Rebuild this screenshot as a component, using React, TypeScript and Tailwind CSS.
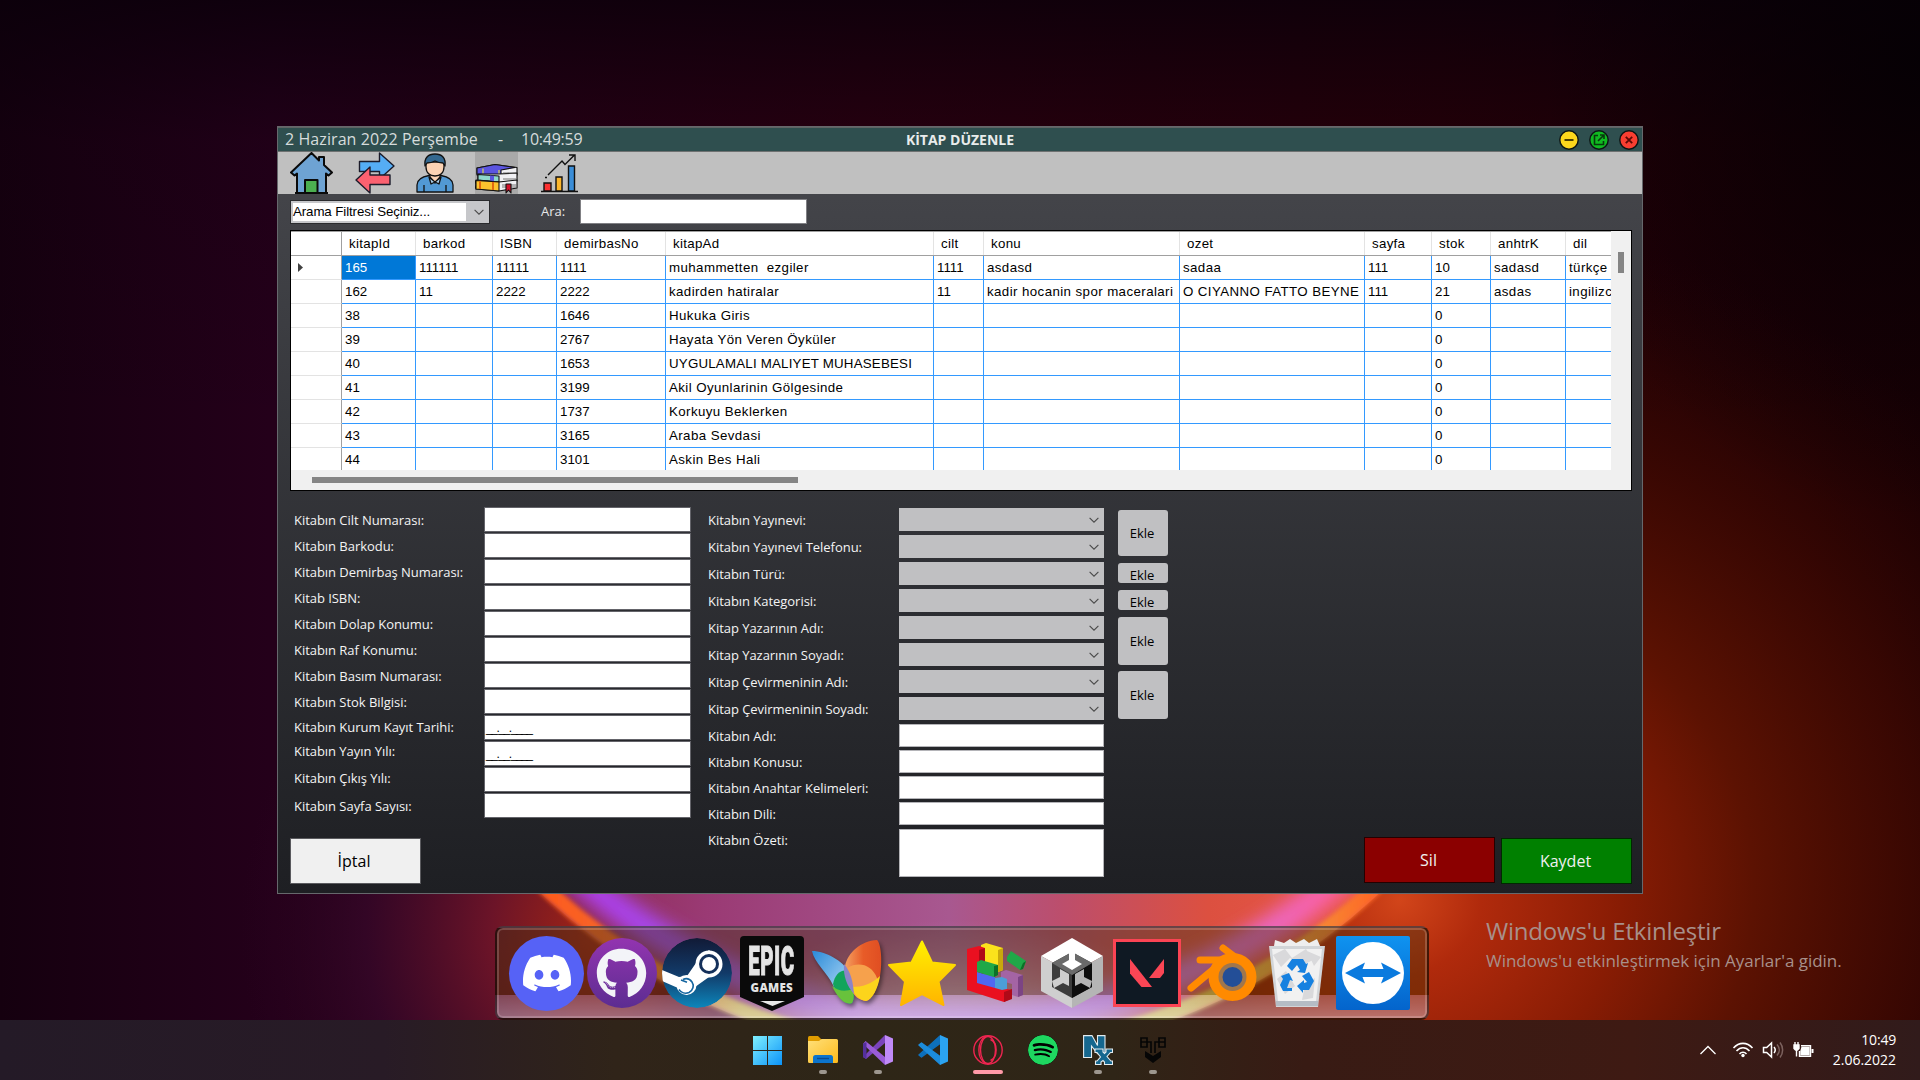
import React from "react";
import { SiDiscord, SiSpotify } from "react-icons/si";
import { FaGithub } from "react-icons/fa";

const columns = [
  { name: "kitapId", w: "w-[74px]" },
  { name: "barkod", w: "w-[77px]" },
  { name: "ISBN", w: "w-[64px]" },
  { name: "demirbasNo", w: "w-[109px]" },
  { name: "kitapAd", w: "w-[268px]" },
  { name: "cilt", w: "w-[50px]" },
  { name: "konu", w: "w-[196px]" },
  { name: "ozet", w: "w-[185px]" },
  { name: "sayfa", w: "w-[67px]" },
  { name: "stok", w: "w-[59px]" },
  { name: "anhtrK", w: "w-[75px]" },
  { name: "dil", w: "w-[80px]" },
];

const rows: string[][] = [
  ["165", "111111", "11111", "1111", "muhammetten  ezgiler", "1111", "asdasd", "sadaa", "111", "10", "sadasd", "türkçe"],
  ["162", "11", "2222", "2222", "kadirden hatiralar", "11", "kadir hocanin spor maceralari", "O CIYANNO FATTO BEYNE", "111", "21", "asdas", "ingilizc"],
  ["38", "", "", "1646", "Hukuka Giris", "", "", "", "", "0", "", ""],
  ["39", "", "", "2767", "Hayata Yön Veren Öyküler", "", "", "", "", "0", "", ""],
  ["40", "", "", "1653", "UYGULAMALI MALIYET MUHASEBESI", "", "", "", "", "0", "", ""],
  ["41", "", "", "3199", "Akil Oyunlarinin Gölgesinde", "", "", "", "", "0", "", ""],
  ["42", "", "", "1737", "Korkuyu Beklerken", "", "", "", "", "0", "", ""],
  ["43", "", "", "3165", "Araba Sevdasi", "", "", "", "", "0", "", ""],
  ["44", "", "", "3101", "Askin Bes Hali", "", "", "", "", "0", "", ""],
];

const leftLabels = [
  { t: "Kitabın Cilt Numarası:", h: "h-[26px]" },
  { t: "Kitabın Barkodu:", h: "h-[26px]" },
  { t: "Kitabın Demirbaş Numarası:", h: "h-[26px]" },
  { t: "Kitab ISBN:", h: "h-[26px]" },
  { t: "Kitabın Dolap Konumu:", h: "h-[26px]" },
  { t: "Kitabın Raf Konumu:", h: "h-[26px]" },
  { t: "Kitabın Basım Numarası:", h: "h-[26px]" },
  { t: "Kitabın Stok Bilgisi:", h: "h-[26px]" },
  { t: "Kitabın Kurum Kayıt Tarihi:", h: "h-6" },
  { t: "Kitabın Yayın Yılı:", h: "h-6" },
  { t: "Kitabın Çıkış Yılı:", h: "h-[30px]" },
  { t: "Kitabın Sayfa Sayısı:", h: "h-[26px]" },
];

const comboLabels = [
  "Kitabın Yayınevi:",
  "Kitabın Yayınevi Telefonu:",
  "Kitabın Türü:",
  "Kitabın Kategorisi:",
  "Kitap Yazarının Adı:",
  "Kitap Yazarının Soyadı:",
  "Kitap Çevirmeninin Adı:",
  "Kitap Çevirmeninin Soyadı:",
];
const textLabels = ["Kitabın Adı:", "Kitabın Konusu:", "Kitabın Anahtar Kelimeleri:", "Kitabın Dili:", "Kitabın Özeti:"];

function Wallpaper() {
  return (
    <svg className="absolute inset-0 h-full w-full" viewBox="0 0 1920 1080" preserveAspectRatio="none">
      <defs>
        <linearGradient id="base" x1="0" x2="1" y1="0" y2="0">
          <stop offset="0" stopColor="#15000f" />
          <stop offset=".14" stopColor="#24001a" />
          <stop offset=".45" stopColor="#2a0010" />
          <stop offset=".75" stopColor="#260008" />
          <stop offset="1" stopColor="#180004" />
        </linearGradient>
        <linearGradient id="topDark" x1="0" x2="0" y1="0" y2="1">
          <stop offset="0" stopColor="#0a000a" stopOpacity=".8" />
          <stop offset=".13" stopColor="#0a000a" stopOpacity=".15" />
          <stop offset=".4" stopColor="#0a000a" stopOpacity="0" />
        </linearGradient>
        <radialGradient id="cornerDark" gradientUnits="userSpaceOnUse" cx="0" cy="0" r="1" gradientTransform="translate(1920 60) scale(380 460)">
          <stop offset="0" stopColor="#040004" stopOpacity=".85" />
          <stop offset="1" stopColor="#040004" stopOpacity="0" />
        </radialGradient>
        <radialGradient id="redR" gradientUnits="userSpaceOnUse" cx="0" cy="0" r="1" gradientTransform="translate(1400 900) rotate(-12) scale(740 680)">
          <stop offset="0" stopColor="#d2451a" />
          <stop offset=".11" stopColor="#b02a0c" />
          <stop offset=".3" stopColor="#881c04" />
          <stop offset=".48" stopColor="#5c1202" />
          <stop offset=".72" stopColor="#3c0802" stopOpacity=".85" />
          <stop offset="1" stopColor="#2c0402" stopOpacity="0" />
        </radialGradient>
        <radialGradient id="redL" gradientUnits="userSpaceOnUse" cx="0" cy="0" r="1" gradientTransform="translate(600 930) scale(360 380)">
          <stop offset="0" stopColor="#a42614" />
          <stop offset=".3" stopColor="#6c1428" />
          <stop offset=".65" stopColor="#38082a" stopOpacity=".75" />
          <stop offset="1" stopColor="#2a0420" stopOpacity="0" />
        </radialGradient>
        <linearGradient id="disc" gradientUnits="userSpaceOnUse" x1="560" x2="1370" y1="0" y2="0">
          <stop offset="0" stopColor="#8c2850" />
          <stop offset=".18" stopColor="#9a3a74" />
          <stop offset=".48" stopColor="#a85890" />
          <stop offset=".62" stopColor="#bc4e6c" />
          <stop offset=".8" stopColor="#dc5040" />
          <stop offset="1" stopColor="#ea5848" />
        </linearGradient>
        <radialGradient id="discLow" gradientUnits="userSpaceOnUse" cx="0" cy="0" r="1" gradientTransform="translate(960 1060) scale(260 140)">
          <stop offset="0" stopColor="#e0d0f0" />
          <stop offset=".5" stopColor="#d0a8d0" stopOpacity=".7" />
          <stop offset="1" stopColor="#c080b0" stopOpacity="0" />
        </radialGradient>
        <linearGradient id="rim" gradientUnits="userSpaceOnUse" x1="540" x2="1380" y1="0" y2="0">
          <stop offset="0" stopColor="#ff5a1c" />
          <stop offset=".12" stopColor="#f06a30" />
          <stop offset=".24" stopColor="#e0d060" />
          <stop offset=".76" stopColor="#e4d868" />
          <stop offset=".88" stopColor="#f0a040" />
          <stop offset="1" stopColor="#ff6424" />
        </linearGradient>
        <linearGradient id="halo" gradientUnits="userSpaceOnUse" x1="560" x2="1350" y1="0" y2="0">
          <stop offset="0" stopColor="#b03ae8" />
          <stop offset=".2" stopColor="#a050f0" />
          <stop offset=".4" stopColor="#c890e8" />
          <stop offset=".7" stopColor="#c080f0" />
          <stop offset=".88" stopColor="#e868c8" />
          <stop offset="1" stopColor="#ff60a0" />
        </linearGradient>
        <clipPath id="lower"><rect y="800" width="1920" height="280" /></clipPath>
        <filter id="b6" x="-10%" y="-10%" width="120%" height="120%"><feGaussianBlur stdDeviation="9" /></filter>
        <filter id="b3" x="-10%" y="-10%" width="120%" height="120%"><feGaussianBlur stdDeviation="2" /></filter>
      </defs>
      <rect width="1920" height="1080" fill="url(#base)" />
      <rect width="1920" height="1080" fill="url(#redR)" />
      <rect width="1920" height="1080" fill="url(#redL)" />
      <rect width="1920" height="1080" fill="url(#topDark)" />
      <rect width="1920" height="1080" fill="url(#cornerDark)" />
      <g clipPath="url(#lower)">
        <circle cx="960" cy="442" r="616" fill="url(#disc)" />
        <ellipse cx="960" cy="1060" rx="260" ry="140" fill="url(#discLow)" />
        <circle cx="960" cy="442" r="578" fill="none" stroke="url(#halo)" strokeWidth="28" filter="url(#b6)" />
        <circle cx="960" cy="442" r="609" fill="none" stroke="url(#rim)" strokeWidth="15" filter="url(#b3)" />
      </g>
    </svg>
  );
}

function Chevron({ className = "" }: { className?: string }) {
  return (
    <svg viewBox="0 0 10 6" className={"h-[6px] w-[10px] " + className} fill="none" stroke="#4a4a4a" strokeWidth="1.1">
      <path d="M.6.8 5 5.2 9.4.8" />
    </svg>
  );
}

function HomeIcon() {
  return (
    <svg viewBox="0 0 43 42" className="h-[42px] w-[43px]" stroke="#0a0a0a" strokeWidth="2" strokeLinejoin="round">
      <path d="M21.500 1 1 20.500l3.500 3L7 21.500V41h29V21.500l2.500 2 3.500-3L34 13V5h-5v3.500z" fill="#6ea3d3" />
      <path d="M15 41V28h12.500v13z" fill="#4caf50" />
      <path d="M5 41h33" />
    </svg>
  );
}

function ArrowsIcon() {
  return (
    <svg viewBox="0 0 40 42" className="h-[42px] w-10" stroke="#1b1b2a" strokeWidth="1.400" strokeLinejoin="round">
      <path d="M4.500 9.500h20V1L39 14 24.500 27v-7.500h-20z" fill="#55adf5" />
      <path d="M35 23H15v-8L1 28l14 13v-8.500h20z" fill="#fb6170" />
    </svg>
  );
}

function PersonIcon() {
  return (
    <svg viewBox="0 0 38 40" className="h-10 w-[38px]" stroke="#111" strokeWidth="1.300" strokeLinejoin="round">
      <path d="M1 39v-7c0-5 4-8 12-9.500h12c8 1.500 12 4.500 12 9.500v7z" fill="#5299d4" />
      <path d="M14 18v6l5 6 5-6v-6z" fill="#fbd3b4" />
      <path d="M10 9v5c0 6 4 9 9 9s9-3 9-9V9z" fill="#fbd3b4" />
      <path d="M9 13C8 5 12 1 19 1s11 4 10 12l-2-3c-4 0-6-1-8-2-2 1-4 2-8 2z" fill="#34688f" />
      <path d="m13 24 2 7 4-2 4 2 2-7-6 5z" fill="#a8cdea" />
      <path d="M8 32v7M30 32v7" fill="none" />
    </svg>
  );
}

function BooksIcon() {
  return (
    <svg viewBox="0 0 43 42" className="h-[42px] w-[43px]" stroke="#111" strokeWidth="1.100" strokeLinejoin="round">
      <path d="M2 16 20 12.500l22 3V23l-18 2-22-2z" fill="#f0f0f4" />
      <path d="M2 16 20 12.500l20 3-14 2.500V24L2 22z" fill="#5b55e0" />
      <path d="M24 18v5.500M8 16.500v5" stroke="#e6e640" />
      <path d="M3 22h21l18-1v8l-18 1.500L3 28z" fill="#f0f0f4" />
      <path d="M3 22.500 24 24v6L3 28z" fill="#8fd8cc" />
      <path d="m15 23.500 4 .3V29l-4-.3z" fill="#5b55e0" stroke="none" />
      <path d="m1 28 23 2 18-2v8l-18 3-23-2c-1-3-1-6 0-9z" fill="#f0f0f4" />
      <path d="M1 28.500 24 30v9L1 37z" fill="#fcc32d" />
      <path d="M5 29v8M18 30v8" stroke="#e06a10" strokeWidth="2" />
      <path d="M28 21h13M28 27h13M27 33h14M27 35h14" stroke="#555" strokeWidth=".8" />
      <path d="M31 32h5v9l-2.500-3-2.500 3z" fill="#d3122c" />
    </svg>
  );
}

function ChartIcon() {
  return (
    <svg viewBox="0 0 37 40" className="h-10 w-[37px]" stroke="#111" strokeWidth="1.400">
      <path d="M0 38.500h37" />
      <path d="M3 38V30h7v8z" fill="#fb3030" />
      <path d="M15 38V24h6v14z" fill="#fcb62c" />
      <path d="M27.500 38V13h6v25z" fill="#3b8ed8" />
      <path d="M7 22 21 8l3 3.500L33.500 2M28 2h6v6" fill="none" />
      <path d="M4 24.500h2" />
    </svg>
  );
}

function TitleBar() {
  return (
    <div className="grid h-[25px] shrink-0 grid-cols-[1fr_auto_1fr] items-center border-t border-b border-t-[#5f6464] border-b-[#6e7171] bg-[#2f4f4f] pr-[3px] pl-[7px] text-[#d6dcdc]">
      <div className="flex items-center pb-px text-[16px] leading-none whitespace-pre">
        <span className="w-[213px] tracking-[.08px]">2 Haziran 2022 Perşembe</span>
        <span className="w-[23px]">-</span>
        <span className="tracking-[-.25px]">10:49:59</span>
      </div>
      <div className="pr-1 text-[14px] leading-none font-bold text-[#e8ecec]">KİTAP DÜZENLE</div>
      <div className="flex justify-end gap-[10px]">
        <svg viewBox="0 0 20 20" className="h-5 w-5"><circle cx="10" cy="10" r="9.200" fill="#fcd71c" stroke="#0c1414" strokeWidth="1.400" /><path d="M5.500 10h9" stroke="#4c3f00" strokeWidth="2" /></svg>
        <svg viewBox="0 0 20 20" className="h-5 w-5" fill="none" stroke="#07390d" strokeWidth="1.600"><circle cx="10" cy="10" r="9.200" fill="#10b921" stroke="#0c1414" strokeWidth="1.400" /><path d="M9 5.500H5.500v9h9V11M11 5h4v4M15 5l-6 6" /></svg>
        <svg viewBox="0 0 20 20" className="h-5 w-5"><circle cx="10" cy="10" r="9.200" fill="#f83e31" stroke="#0c1414" strokeWidth="1.400" /><path d="m6.800 6.800 6.400 6.400m0-6.400-6.400 6.400" stroke="#5c0804" strokeWidth="1.800" /></svg>
      </div>
    </div>
  );
}

function Toolbar() {
  return (
    <div className="flex h-[42px] shrink-0 items-center bg-[#c0c0c0] pl-[12px]">
      <HomeIcon />
      <div className="ml-[22px]"><ArrowsIcon /></div>
      <div className="ml-[21px]"><PersonIcon /></div>
      <div className="ml-[21px] bg-[#a9a9a9]"><BooksIcon /></div>
      <div className="ml-[23px]"><ChartIcon /></div>
    </div>
  );
}

function spacing(v: string) {
  if (/^\d*$/.test(v)) return "";
  if (/^[A-Z]{8}/.test(v)) return " tracking-[.21px]";
  return " tracking-[.41px]";
}

function BookTable() {
  return (
    <div className="mt-[6px] ml-[12px] flex h-[261px] w-[1342px] shrink-0 flex-col border border-black bg-[#f0f0f0] font-['Liberation_Sans',sans-serif] text-[13.300px] text-black">
      <div className="flex h-[239px]">
        <div className="h-full w-[1320px] overflow-hidden border-t border-[#a0a0a0] bg-white">
          <div className="flex h-6 w-[1400px] border-b border-[#a0a0a0]">
            <div className="w-[51px] shrink-0 border-r border-[#a0a0a0]" />
            {columns.map((c) => (
              <div key={c.name} className={"flex shrink-0 items-center border-r border-[#e3e3e3] pt-px pl-[7px] tracking-[.3px] " + c.w}>{c.name}</div>
            ))}
          </div>
          {rows.map((r, i) => (
            <div key={r[0]} className="flex h-6 w-[1400px]">
              <div className="flex w-[51px] shrink-0 items-center border-r border-b border-r-[#a0a0a0] border-b-[#e3e3e3] pl-[7px]">
                {i === 0 && <svg viewBox="0 0 5 9" className="h-[9px] w-[5px]"><path d="M0 0v9l5-4.500z" fill="#404040" /></svg>}
              </div>
              {r.map((v, j) => (
                <div
                  key={j}
                  className={
                    "flex shrink-0 items-center border-r border-b border-[#3399ff] pt-px pl-[3px] whitespace-pre " +
                    columns[j].w + spacing(v) + (i === 0 && j === 0 ? " bg-[#0078d7] text-white" : "")
                  }
                >
                  {v}
                </div>
              ))}
            </div>
          ))}
        </div>
        <div className="flex flex-1 justify-center pt-[21px]">
          <div className="h-[21px] w-[6px] bg-[#858585]" />
        </div>
      </div>
      <div className="pt-[7px] pl-[21px]">
        <div className="h-[6px] w-[486px] bg-[#858585]" />
      </div>
    </div>
  );
}

function BookForm() {
  return (
    <div className="mt-[16px] ml-[16px] flex h-[331px] shrink-0 items-start text-[13px] text-[#f4f4f4]">
      <div className="w-[190px] pt-px">
        {leftLabels.map((l) => (
          <div key={l.t} className={"flex items-center tracking-[-.04px] " + l.h}>{l.t}</div>
        ))}
      </div>
      <div className="flex w-[207px] flex-col gap-px">
        {leftLabels.map((l, i) => (
          <div key={l.t} className="flex h-[25px] items-center border border-[#64646a] bg-white pl-px font-['Liberation_Sans',sans-serif] text-[12px] tracking-[-1.450px] text-black">
            {i === 8 || i === 9 ? "__.__.____" : ""}
          </div>
        ))}
      </div>
      <div className="ml-[17px] w-[191px] tracking-[-.04px]">
        {comboLabels.map((l) => (
          <div key={l} className="flex h-[27px] items-center">{l}</div>
        ))}
        {textLabels.map((l) => (
          <div key={l} className="flex h-[26px] items-center pt-[2px]">{l}</div>
        ))}
      </div>
      <div className="w-[205px] pt-px">
        <div className="mb-1 flex flex-col gap-1">
          {comboLabels.map((l) => (
            <div key={l} className="flex h-[23px] items-center justify-end bg-[#c0c0c2] pr-[5px]"><Chevron /></div>
          ))}
        </div>
        <div className="mb-1 flex flex-col gap-[3px]">
          {textLabels.slice(0, 4).map((l) => (
            <div key={l} className="h-[23px] border border-[#b4b4b8] bg-white" />
          ))}
        </div>
        <div className="h-12 border border-[#b4b4b8] bg-white" />
      </div>
      <div className="ml-[14px] flex w-[50px] flex-col pt-[3px] text-black">
        <div className="flex h-[46px] items-center justify-center rounded-[3px] bg-[#c0c0c2] pt-px pr-[2px]">Ekle</div>
        <div className="mt-[7px] flex h-5 items-center justify-center overflow-hidden rounded-[3px] bg-[#c0c0c2] pt-[5px] pr-[2px]">Ekle</div>
        <div className="mt-[7px] flex h-5 items-center justify-center overflow-hidden rounded-[3px] bg-[#c0c0c2] pt-[5px] pr-[2px]">Ekle</div>
        <div className="mt-[7px] flex h-12 items-center justify-center rounded-[3px] bg-[#c0c0c2] pt-px pr-[2px]">Ekle</div>
        <div className="mt-[6px] flex h-12 items-center justify-center rounded-[3px] bg-[#c0c0c2] pt-px pr-[2px]">Ekle</div>
      </div>
    </div>
  );
}

function AppWindow() {
  return (
    <div className="absolute top-[126px] left-[277px] flex h-[768px] w-[1366px] flex-col overflow-hidden border border-[#66686c] bg-linear-to-b from-[#47484d] to-[#1e1f23]">
      <TitleBar />
      <Toolbar />
      <div className="flex h-[30px] shrink-0 items-end pl-[12px]">
        <div className="flex h-[24px] w-[200px] items-center justify-between border border-[#2a2b2e] bg-[#c6c7ca] pr-[5px] pl-[2px]">
          <div className="flex h-[18px] w-[173px] items-center bg-white font-['Liberation_Sans',sans-serif] text-[13.300px] tracking-[-.1px] whitespace-nowrap text-black">Arama Filtresi Seçiniz...</div>
          <Chevron />
        </div>
        <div className="ml-[51px] w-[39px] pb-[3px] text-[13px] text-[#e8e8e8]">Ara:</div>
        <div className="h-[25px] w-[227px] border border-[#808084] bg-white" />
      </div>
      <BookTable />
      <BookForm />
      <div className="flex items-start pl-[12px] text-[16px]">
        <div className="flex h-[46px] w-[131px] items-center justify-center border border-[#5a5a5e] bg-[#f0f0f0] pr-[3px] text-black">İptal</div>
        <div className="-mt-px ml-[943px] flex h-[46px] w-[131px] items-center justify-center border border-[#240000] bg-[#8b0000] pr-[2px] text-[#f0f0f0]">Sil</div>
        <div className="ml-[6px] flex h-[46px] w-[131px] items-center justify-center border border-[#002800] bg-[#008000] pr-[2px] text-[#f0f0f0]">Kaydet</div>
      </div>
    </div>
  );
}

function Discord() {
  return (
    <div className="flex h-[75px] w-[75px] items-center justify-center rounded-full bg-[#5662f6] text-[48px] text-white"><SiDiscord /></div>
  );
}

function Github() {
  return (
    <div className="flex h-[70px] w-[70px] items-center justify-center rounded-full bg-linear-to-b from-[#9334b0] to-[#5c2c91] text-[51px] text-[#f3f4f8]"><FaGithub /></div>
  );
}

function Steam() {
  return (
    <svg viewBox="0 0 70 70" className="h-[70px] w-[70px]">
      <defs>
        <linearGradient id="st" x1="0" x2="0" y1="0" y2="1"><stop offset="0" stopColor="#111a36" /><stop offset=".5" stopColor="#123a68" /><stop offset="1" stopColor="#0c86bb" /></linearGradient>
        <clipPath id="stc"><circle cx="35" cy="35" r="35" /></clipPath>
      </defs>
      <g clipPath="url(#stc)">
        <circle cx="35" cy="35" r="35" fill="url(#st)" />
        <path d="M0 32 17 39l8-1 9-13 13-13 13 14-13 13-14 10-8 8-9-7L0 43z" fill="#fff" />
        <circle cx="24.500" cy="47" r="10" fill="#fff" />
        <circle cx="47" cy="26" r="13.500" fill="#fff" />
        <circle cx="47" cy="26" r="10" fill="#14305a" />
        <circle cx="47" cy="26" r="7" fill="#fff" />
        <path d="m19 42 6 2.300M17 51.500c2 3 6 4.500 10 3 4-2 5.500-7 3-10.500s-6-4-9-2.500" fill="none" stroke="#1566a0" strokeWidth="1.600" />
      </g>
    </svg>
  );
}

function Epic() {
  return (
    <div className="relative h-[75px] w-[64px]">
      <svg viewBox="0 0 64 75" className="absolute inset-0 h-full w-full"><path d="M4 0h56q4 0 4 4v57L32 75 0 61V4q0-4 4-4z" fill="#0a0a0a" /><path d="M20 65h25l-12.500 5z" fill="#e8e8e8" /></svg>
      <div className="relative flex flex-col items-center pt-[4px] text-[#e4e4e4]">
        <div className="origin-center scale-x-[.5] font-['Roboto',sans-serif] text-[41px] leading-[42px] font-black tracking-[1px] [-webkit-text-stroke:1px_#e4e4e4]">EPIC</div>
        <div className="text-[11.500px] leading-[12px] font-extrabold tracking-[.3px]">GAMES</div>
      </div>
    </div>
  );
}

function Butterfly() {
  return (
    <svg viewBox="0 0 72 66" className="h-[66px] w-[72px] drop-shadow-[2px_3px_2px_rgba(0,0,0,.45)]">
      <defs>
        <linearGradient id="bf1" x1="0" x2="1" y1="0" y2="1"><stop offset="0" stopColor="#2a8ad8" /><stop offset=".6" stopColor="#8cc4ee" /><stop offset="1" stopColor="#4a90d0" /></linearGradient>
        <linearGradient id="bf2" x1="0" x2="1" y1="0" y2="0"><stop offset="0" stopColor="#f4a060" /><stop offset=".5" stopColor="#e85c28" /><stop offset="1" stopColor="#e04e22" /></linearGradient>
      </defs>
      <path d="M1 11c14 0 31 10 37 21 5 10 7 24 3 31-8 3-15-9-19-18C17 34 3 22 1 11z" fill="url(#bf1)" />
      <path d="M22 44c2-10 8-15 15-13 6 11 8 25 4 32-8 3-15-8-19-19z" fill="#12a45c" />
      <path d="M21 46c6 5 13 6 21 3 1 6 1 11-1 14-8 3-16-8-20-17z" fill="#68c23c" />
      <path d="M34 26C37 12 50 1 66 0c5 5 5 26 3 36-3 14-9 24-14 25-6-1-13-4-15-14-3-9-6-13-6-21z" fill="url(#bf2)" />
      <path d="M36 28c12-7 25-3 30 10 1 12-5 20-11 23-6-1-13-4-15-14z" fill="#f6a14c" />
      <path d="M41 47c10 0 20-3 28-11-2 13-8 24-14 25-6-1-12-5-14-14z" fill="#fcd41c" />
      <path d="M33 24c7 8 9 18 10 30-7-8-11-18-10-30z" fill="#8c84c8" />
    </svg>
  );
}

function Star() {
  return (
    <svg viewBox="0 0 68 66" className="h-[66px] w-[68px]">
      <defs><linearGradient id="sg" gradientUnits="userSpaceOnUse" x1="0" x2="0" y1="0" y2="66"><stop offset="0" stopColor="#fff000" /><stop offset="1" stopColor="#ffb400" /></linearGradient></defs>
      <path d="M34 1.500 44 22.500 67 25 50.500 41.500 55.500 65 34 54 13 65l4-23.500L1 25l22.500-2.500z" fill="url(#sg)" stroke="url(#sg)" strokeWidth="2" strokeLinejoin="round" />
    </svg>
  );
}

function Bricks() {
  return (
    <svg viewBox="0 0 60 60" className="h-[60px] w-[60px]">
      <path d="m14 2 5-2 17 5v22l-5 2-17-5z" fill="#fbe21c" /><path d="m31 7 5-2v22l-5 2z" fill="#c9a80c" />
      <path d="m0 6 12-3 6 2v36l27 6v8l-8 4L0 47z" fill="#ea1020" /><path d="m12 7 6-2v30l-6 2zM37 49l8-3v10l-8 3z" fill="#b00a18" />
      <path d="m34 29 5-2 17 5v20l-5 2-6-2V41l-11-3z" fill="#a464a4" /><path d="m51 34 5-2v20l-5 2z" fill="#7c4484" />
      <path d="m10 29 18 5v11l-18-5z" fill="#5068f0" /><path d="m28 35 7-1 5 2v10l-5 1-7-2z" fill="#4c9ed8" />
      <path d="m10 19 4-2 17 5v10l-4 2-17-5z" fill="#1fa848" /><path d="m27 23 4-1v10l-4 2z" fill="#0c7028" />
      <path d="m40 14 4-6 15 10-3 8-3 1-13-9z" fill="#1fa848" /><path d="m56 20 3-2-3 8-3 1z" fill="#0c7028" />
    </svg>
  );
}

function Unity() {
  return (
    <svg viewBox="0 0 62 70" className="h-[70px] w-[62px]">
      <path d="M31 0 62 18 31 35 0 18z" fill="#fff" /><path d="M0 18 31 35v35L0 53z" fill="#cfcfcf" /><path d="M62 18v35L31 70V35z" fill="#b5b5b5" />
      <path d="m31 14 20 11v24L31 60 11 49V25z" fill="#3c3c3c" />
      <path d="M31 37 51 25v24L31 60z" fill="#0e0e0e" />
      <path d="m31 14 20 11-20 12-20-12z" fill="#6a6a6a" />
      <path d="M28 13h6v9l7 4-10 6-10-6 7-4z" fill="#fff" />
      <path d="m11 43 8-4v-8l9 5v12l-6-3-9 5z" fill="#cfcfcf" />
      <path d="m51 43-8-4v-8l-9 5v12l6-3 9 5z" fill="#b5b5b5" />
    </svg>
  );
}

function Valorant() {
  return (
    <svg viewBox="0 0 68 68" className="h-[68px] w-[68px]">
      <path d="M1.500 1.500h65v65h-65z" fill="#0f1923" stroke="#fb4454" strokeWidth="3" />
      <path d="M17 20v14.500L28.500 48H39z" fill="#fb4655" /><path d="M51 20v14l-4 5H36z" fill="#fb4655" />
    </svg>
  );
}

function Blender() {
  return (
    <svg viewBox="0 0 70 58" className="h-[58px] w-[70px]">
      <g fill="none" stroke="#ff8a00" strokeLinecap="round"><path d="M13 16h34M36 4l20 15M4 44l30-25" strokeWidth="7" /></g>
      <path d="M28 17h22c8 2 14 8 17 14L24 28z" fill="#ff8a00" />
      <ellipse cx="45.500" cy="33" rx="24" ry="24" fill="#ff8a00" />
      <circle cx="45.500" cy="33" r="14" fill="#a0764c" />
      <circle cx="45.500" cy="33" r="10" fill="#234e97" />
    </svg>
  );
}

function RecycleBin() {
  return (
    <svg viewBox="0 0 56 68" className="h-[68px] w-[56px]">
      <path d="M5 7 6 1l9 3 6-4 6 4 8-4 5 4 8-4 4 9-5 10H6z" fill="#eeeeee" />
      <path d="M0 7h56l-7 61H7z" fill="#d2d5d8" /><path d="M3 10h50l-6 52H9z" fill="#f1f1f1" />
      <path d="m4 16 12-6 7 9 14-9 7 11-10 5-13-7-9 9zM8 40l9-8 9 15-10 8zM36 46l10-7-2 20-11 2zM38 12l14 6-7 9z" fill="#d9d9db" />
      <path d="M7 62h42v5H7z" fill="#b5bcc4" />
      <g fill="#1681e0">
        <path d="m18 27 5-7h11l3 5 2-1-3 10-8-1 3-2-3-5-5 6z" /><path d="m12 37 8-3 4 8-3-1-3 8h5v3H14l-3-6 3-6z" /><path d="m33 37 7-4 5 9-5 9h-6v3l-6-7 7-6v3l3-1z" />
      </g>
    </svg>
  );
}

function TeamViewer() {
  return (
    <svg viewBox="0 0 74 74" className="h-[74px] w-[74px]">
      <defs><linearGradient id="tv" x1="0" x2="0" y1="0" y2="1"><stop offset="0" stopColor="#0f93f0" /><stop offset="1" stopColor="#0464cc" /></linearGradient></defs>
      <rect width="74" height="74" rx="2" fill="url(#tv)" /><circle cx="37" cy="37" r="31" fill="#fff" />
      <path d="m9 37 20-10.500-2.500 6.500h21L45 26.500 65 37 45 47.500l2.500-6.500h-21l2.500 6.500z" fill="#0a7ade" />
    </svg>
  );
}

const dockItems = [Discord, Github, Steam, Epic, Butterfly, Star, Bricks, Unity, Valorant, Blender, RecycleBin, TeamViewer];

function Dock() {
  return (
    <div className="absolute top-[926px] left-[495px] flex h-[94px] w-[934px] items-center rounded-[8px] border-2 border-black/50 bg-[linear-gradient(to_bottom,rgba(60,50,20,.42)_0%,rgba(70,50,0,.42)_74%,rgba(170,150,160,.4)_75%,rgba(215,205,225,.45)_100%)] pl-[12px] shadow-[inset_0_0_0_2px_rgba(255,255,255,.18)]">
      {dockItems.map((Item, i) => (
        <div key={i} className="flex w-[75.100px] shrink-0 items-center justify-center"><Item /></div>
      ))}
    </div>
  );
}

function WindowsLogo() {
  return (
    <svg viewBox="0 0 29 29" className="h-[29px] w-[29px]">
      <defs><linearGradient id="wl" gradientUnits="userSpaceOnUse" x1="0" y1="0" x2="29" y2="29"><stop offset="0" stopColor="#7ff0ff" /><stop offset="1" stopColor="#0c93f8" /></linearGradient></defs>
      <path d="M0 0h14v14H0zM15 0h14v14H15zM0 15h14v14H0zM15 15h14v14H15z" fill="url(#wl)" />
    </svg>
  );
}

function Explorer() {
  return (
    <svg viewBox="0 0 30 28" className="h-7 w-[30px]">
      <defs><linearGradient id="ex" x1="0" x2="1" y1="0" y2="1"><stop offset="0" stopColor="#ffe07a" /><stop offset="1" stopColor="#fcba1c" /></linearGradient></defs>
      <path d="M0 1.500Q0 0 1.500 0H10l3 3v6H0z" fill="#e09c00" /><path d="M0 5h11l2.500-2H28.500Q30 3 30 4.500v21q0 1.500-1.500 1.500h-27Q0 27 0 25.500z" fill="url(#ex)" />
      <path d="M5 27v-5.500Q5 19 7.500 19h15q2.500 0 2.500 2.500V27z" fill="#0c74cc" /><path d="M9 22.500h12" stroke="#0a4a90" strokeWidth="1.400" />
    </svg>
  );
}

function VisualStudio() {
  return (
    <svg viewBox="0 0 30 30" className="h-[30px] w-[30px]">
      <path d="M0 22 22 0v8L3 24z" fill="#7a44bc" />
      <path d="m2.500 6 19.500 16v8L0 9z" fill="#9a5cd8" />
      <path d="M0 8.500V22l3.500 2V7z" fill="#54309c" />
      <path d="M22 0 30 3.500v23L22 30z" fill="#c08af8" />
    </svg>
  );
}

function VsCode() {
  return (
    <svg viewBox="0 0 30 30" className="h-[30px] w-[30px]" strokeLinejoin="round">
      <path d="m1 20 21-19v7.500L3.500 22z" fill="#0e70bc" stroke="#0e70bc" strokeWidth="1.500" /><path d="m1 10 2.500-2L22 21.500V29z" fill="#1c8cdc" stroke="#1c8cdc" strokeWidth="1.500" /><path d="M22 0 30 3.500v23L22 30z" fill="#2ba4f2" />
    </svg>
  );
}

function OperaGx() {
  return (
    <svg viewBox="0 0 30 30" className="h-[30px] w-[30px]" fill="none" stroke="#ee2550" strokeWidth="1.400">
      <circle cx="15" cy="15" r="14.200" /><ellipse cx="15" cy="15" rx="7.500" ry="13.500" /><path d="M17.500 4.500c7.500 3 7.500 18 0 21M13 1.500C3.500 5 3.500 25 13 28.500" />
    </svg>
  );
}

function Nx() {
  return (
    <svg viewBox="0 0 30 30" className="h-[30px] w-[30px]" fill="#15678f" stroke="#e4ecf0" strokeWidth="1.100">
      <path d="M.6.6H9l5.500 10V.6h7.500v18h-7.500L8.500 11v11.500H.6z" />
      <path d="M12 14h8v3l1.500 1.500L23 17v-3h6.500v3.500h-2L24 21.500l4 4.500h1.500v3.500h-8V27l-1.500-1.500L18 27v2.500h-5.500V26h1.500l3.500-4-3.500-4.500h-2z" />
    </svg>
  );
}

function BlackTool() {
  return (
    <svg viewBox="0 0 26 26" className="h-[26px] w-[26px]" fill="none" stroke="#060606" strokeWidth="1.700">
      <path d="M1 1h6v9H1zM19 1h6v9h-6zM1 5h6M19 5h6M7 5h4v11M19 5h-4v11" /><path d="M5 14v6l8 6 8-6v-6l-8 5z" fill="#060606" stroke="none" />
    </svg>
  );
}

function Spotify() {
  return <SiSpotify className="h-[30px] w-[30px] rounded-full bg-black text-[#1ed760]" />;
}

const tasks = [
  { I: WindowsLogo, bar: "bg-transparent w-2" },
  { I: Explorer, bar: "bg-[#9d978f] w-2" },
  { I: VisualStudio, bar: "bg-[#9d978f] w-2" },
  { I: VsCode, bar: "bg-transparent w-2" },
  { I: OperaGx, bar: "bg-[#ff9aa8] w-[30px]" },
  { I: Spotify, bar: "bg-transparent w-2" },
  { I: Nx, bar: "bg-[#9d978f] w-2" },
  { I: BlackTool, bar: "bg-[#9d978f] w-2" },
];

function Taskbar() {
  return (
    <div className="absolute bottom-0 left-0 grid h-[60px] w-full grid-cols-[740px_1fr_auto] bg-[linear-gradient(to_right,#241a27_0%,#281b26_20%,#302419_32%,#2e2617_45%,#2f2517_58%,#381b14_68%,#3e1a13_85%,#311b1b_100%)]">
      <div />
      <div className="flex">
        {tasks.map(({ I, bar }, i) => (
          <div key={i} className="flex w-[55px] flex-col items-center">
            <div className="flex h-[50px] items-center pt-[10px]"><I /></div>
            <div className={"h-1 rounded-full " + bar} />
          </div>
        ))}
      </div>
      <div className="flex items-center pr-[24px] text-white">
        <svg viewBox="0 0 18 10" className="mr-[15px] h-[10px] w-[18px]" fill="none" stroke="#fff" strokeWidth="1.300"><path d="m1.500 9 7.500-7.500L16.500 9" /></svg>
        <svg viewBox="0 0 22 16" className="mr-[8px] h-4 w-[22px]" fill="none" stroke="#fff" strokeWidth="1.600"><path d="M1.500 6C7-.2 15-.2 20.500 6M4.500 9c4-4.300 9-4.300 13 0M7.500 12c2-2.300 5-2.300 7 0" /><circle cx="11" cy="13.500" r="1.700" fill="#fff" stroke="none" /></svg>
        <svg viewBox="0 0 22 18" className="mr-[9px] h-[18px] w-[22px]" fill="none" stroke="#fff" strokeWidth="1.500"><path d="M1.500 6.500h3.200L9.500 2v14l-4.800-4.500H1.500z" /><path d="M12 6c1.500 1.800 1.500 4.200 0 6" /><path d="M15 3.500c3 3.300 3 7.700 0 11M18 1.500c3.500 4.500 3.500 10.500 0 15" stroke="#7c625e" /></svg>
        <svg viewBox="0 0 21 18" className="mr-[19px] h-[18px] w-[21px]" fill="none" stroke="#fff" strokeWidth="1.400"><path d="M8 4.700h9.500v10.600H6.500V10" /><path d="M9 6.500h7v7H8V10z" fill="#fff" /><path d="M19.500 8v4" strokeWidth="2" /><path d="M1 4h5v3.500L4.500 9h-2L1 7.500z" fill="#fff" /><path d="M2 1v3M5 1v3M3.500 9v6.500" /></svg>
        <div className="flex flex-col items-end text-[14px] leading-5">
          <span className="tracking-[-.2px]">10:49</span>
          <span className="tracking-[-.02px]">2.06.2022</span>
        </div>
      </div>
    </div>
  );
}

export default function App() {
  return (
    <div className="relative h-[1080px] w-[1920px] overflow-hidden bg-black font-['Open_Sans','Noto_Sans',sans-serif]">
      <Wallpaper />
      <div className="absolute top-[914px] left-[1486px] whitespace-nowrap text-[#a8908a]">
        <div className="text-[24px] leading-[34px] tracking-[-.2px]">Windows'u Etkinleştir</div>
        <div className="text-[17px] leading-[25px] tracking-[-.02px]">Windows'u etkinleştirmek için Ayarlar'a gidin.</div>
      </div>
      <AppWindow />
      <Dock />
      <Taskbar />
    </div>
  );
}
